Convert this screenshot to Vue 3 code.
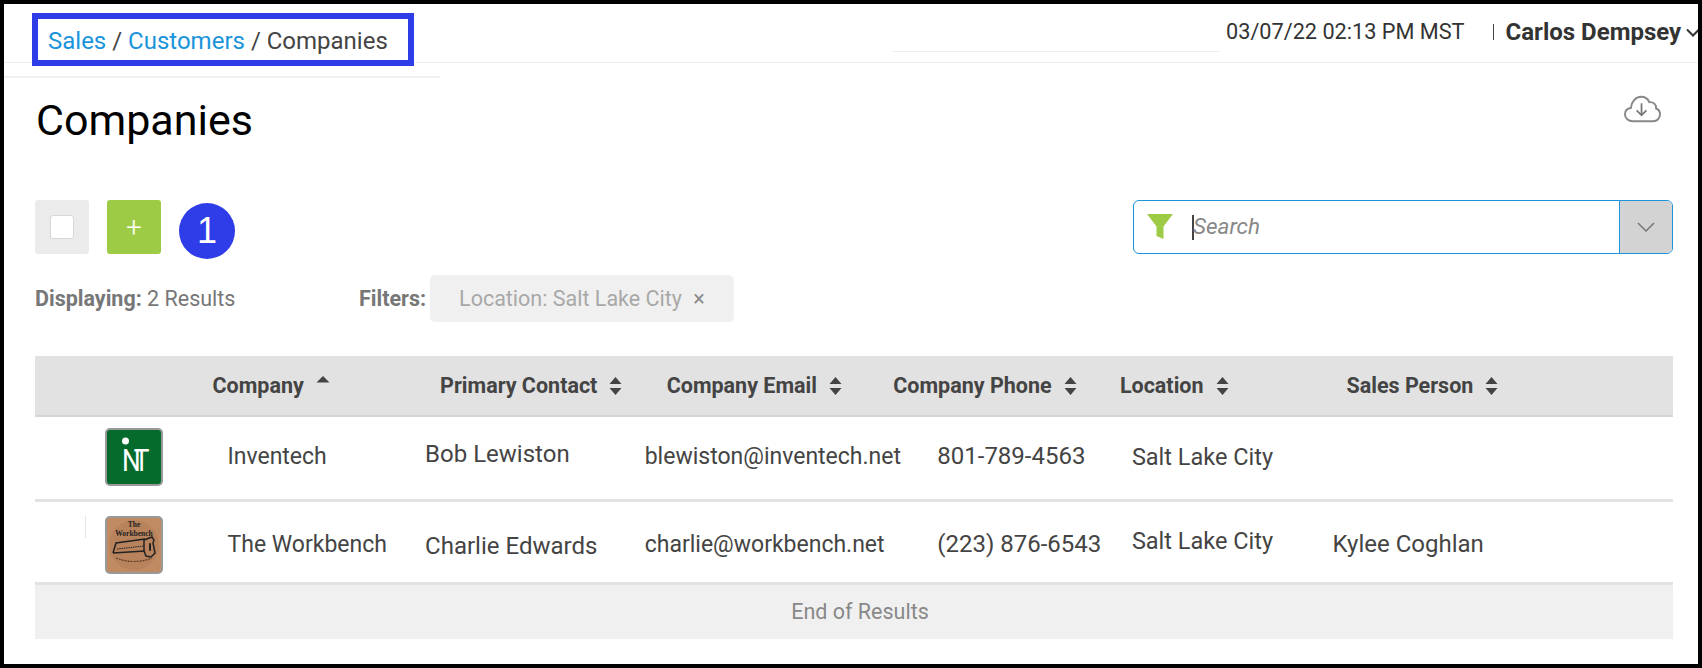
<script setup>
const columns = [
  { label: 'Company', sort: 'asc' },
  { label: 'Primary Contact' },
  { label: 'Company Email' },
  { label: 'Company Phone' },
  { label: 'Location' },
  { label: 'Sales Person' }
]
</script>

<template>
  <div class="page">
    <header class="topbar">
      <nav class="crumbs">
        <a>Sales</a> / <a>Customers</a> / Companies
      </nav>
      <div class="top-right">
        <div class="top-input"></div>
        <div class="clock">03/07/22 02:13 PM MST</div>
        <div class="user">
          <span class="user-name">Carlos Dempsey</span>
          <svg class="user-caret" width="14" height="9" viewBox="0 0 14 9">
            <path d="M1 1.500l6 6 6-6" fill="none" stroke="#333" stroke-width="2" />
          </svg>
        </div>
      </div>
    </header>

    <div class="title-row">
      <h1>Companies</h1>
      <svg class="cloud" width="37" height="28" viewBox="0 0 38 28">
        <path d="M9 26.500C4.500 26.500 1 23.500 1 19.500C1 16 3.500 13.500 7 13C7.500 6.500 12 1.500 17.500 1.500C21.500 1.500 24.500 3.500 26 7C30.500 6.500 33.500 10 33 13.500C35.500 14.500 37 17 37 19.500C37 23.500 34 26.500 30 26.500Z" fill="none" stroke="#888" stroke-width="2" />
        <path d="M18 8v12.500M13 15.500l5 5 5-5" fill="none" stroke="#777" stroke-width="1.800" />
      </svg>
    </div>

    <div class="tools">
      <div class="tool-left">
        <div class="check-btn"><span class="check-box"></span></div>
        <div class="add-btn">+</div>
        <div class="badge">1</div>
      </div>
      <div class="search">
        <svg class="funnel" width="26" height="26" viewBox="0 0 26 26">
          <path d="M0 0h26L16.500 12.500V25l-7-3V12.500Z" fill="#9ecb45" />
        </svg>
        <span class="cursor"></span>
        <span class="placeholder">Search</span>
        <span class="search-drop">
          <svg width="18" height="10" viewBox="0 0 18 10">
            <path d="M1 1l8 8 8-8" fill="none" stroke="#777" stroke-width="1.500" />
          </svg>
        </span>
      </div>
    </div>

    <div class="summary">
      <div class="displaying"><b>Displaying:</b> 2 Results</div>
      <div class="filters">
        <b>Filters:</b>
        <span class="chip">Location: Salt Lake City <i>×</i></span>
      </div>
    </div>

    <div class="table">
      <div class="thead">
        <div v-for="col in columns" :key="col.label" class="th">
          {{ col.label }}
          <svg v-if="col.sort === 'asc'" class="sort sort-asc" width="14" height="18" viewBox="0 0 14 18">
            <path d="M7 1l6.500 6.500H.5Z" fill="#444" />
          </svg>
          <svg v-else class="sort" width="13" height="18" viewBox="0 0 13 18">
            <path d="M6.500 0l6 7H.5ZM6.500 18L.5 11h12Z" fill="#444" />
          </svg>
        </div>
      </div>

      <div class="row row-first">
        <div class="logo-cell">
          <svg class="logo" width="58" height="58" viewBox="0 0 58 58">
            <rect x="1" y="1" width="56" height="56" rx="4" fill="#056b2c" stroke="#999" stroke-width="2" />
            <circle cx="20.500" cy="13" r="3.500" fill="#fff" />
            <text transform="translate(17 43) scale(.82 1)" class="logo-it">NT</text>
          </svg>
        </div>
        <div class="cell c-name">Inventech</div>
        <div class="cell c-contact up">Bob Lewiston</div>
        <div class="cell c-email">blewiston@inventech.net</div>
        <div class="cell c-phone">801-789-4563</div>
        <div class="cell c-loc down">Salt Lake City</div>
        <div class="cell c-sales"></div>
      </div>

      <div class="row row-second">
        <div class="logo-cell">
          <span class="tick"></span>
          <svg class="logo" width="58" height="58" viewBox="0 0 58 58">
            <rect x="1" y="1" width="56" height="56" rx="4" fill="#c08a63" stroke="#999" stroke-width="2" />
            <circle cx="29" cy="29" r="25" fill="#b8825c" />
            <text x="29" y="11" class="logo-small">The</text>
            <text x="29" y="20" class="logo-small">Workbench</text>
            <path d="M8 37l3-10 29-4M8 37l32-2" fill="none" stroke="#222" stroke-width="1.500" />
            <path d="M12 33l27-3" fill="none" stroke="#222" stroke-width="1" stroke-dasharray="1.500 .8" />
            <path d="M39 24l8-3 2 3-1 3 2 10-4 4-5-1-2-5Z" fill="none" stroke="#222" stroke-width="1.500" />
            <path d="M45 28v6" stroke="#222" stroke-width="2" stroke-linecap="round" />
            <path d="M11 42q18 7 36 0" fill="none" stroke="#5b3a22" stroke-width="1.200" stroke-dasharray="2 1" />
          </svg>
        </div>
        <div class="cell c-name">The Workbench</div>
        <div class="cell c-contact down2">Charlie Edwards</div>
        <div class="cell c-email">charlie@workbench.net</div>
        <div class="cell c-phone">(223) 876-6543</div>
        <div class="cell c-loc up2">Salt Lake City</div>
        <div class="cell c-sales">Kylee Coghlan</div>
      </div>

      <div class="tfoot">End of Results</div>
    </div>

    <div class="callout"></div>
  </div>
</template>

<style>
html, body {
  margin: 0;
  background: #000;
}
</style>

<style scoped>
.page {
  position: relative;
  box-sizing: border-box;
  width: 1702px;
  height: 668px;
  border: 4px solid #000;
  background: #fff;
  overflow: hidden;
  font-family: Roboto, "Liberation Sans", sans-serif;
  color: #444;
}

.topbar {
  display: flex;
  height: 72px;
  box-sizing: border-box;
}
.crumbs {
  flex: none;
  box-sizing: border-box;
  width: 436px;
  height: 74px;
  padding: 23px 0 0 44px;
  border-bottom: 2px solid #f0f0f0;
  font-size: 24px;
  line-height: 28px;
  background: linear-gradient(#eee, #eee) 0 58px / 100% 1px no-repeat;
}
.crumbs a {
  color: #1a94db;
}
.top-right {
  flex: 1;
  min-width: 0;
  display: flex;
  height: 59px;
  border-bottom: 1px solid #eee;
  box-sizing: border-box;
  padding-top: 14px;
  white-space: nowrap;
  font-size: 21.7px;
  line-height: 28px;
  color: #333;
}
.top-input {
  flex: none;
  width: 328px;
  height: 33px;
  margin-left: 452px;
  border-bottom: 1px solid #eee;
}
.clock {
  margin-left: 6px;
}
.user {
  margin-left: 28px;
  display: flex;
  align-items: center;
  height: 28px;
  padding-left: 13px;
  position: relative;
}
.user::before {
  content: "";
  position: absolute;
  left: 0;
  top: 6px;
  height: 16px;
  width: 1px;
  background: #444;
}
.user-name {
  font-weight: 700;
  font-size: 24px;
}
.user-caret {
  margin-left: 5px;
  flex: none;
}

.title-row {
  display: flex;
  justify-content: space-between;
  padding: 19px 37px 0 32px;
  height: 80px;
  box-sizing: border-box;
}
h1 {
  margin: 0;
  font-size: 43px;
  line-height: 50px;
  font-weight: 400;
  color: #000;
}
.cloud {
  margin-top: 0;
}

.tools {
  display: flex;
  justify-content: space-between;
  padding: 44px 25px 0 31px;
  height: 119px;
  box-sizing: border-box;
}
.tool-left {
  display: flex;
  gap: 18px;
  align-self: flex-start;
}
.check-btn,
.add-btn {
  box-sizing: border-box;
  width: 54px;
  height: 54px;
  border-radius: 3px;
  display: flex;
  align-items: center;
  justify-content: center;
}
.check-btn {
  background: #ebebeb;
}
.check-box {
  box-sizing: border-box;
  width: 24px;
  height: 24px;
  border-radius: 3px;
  background: #fff;
  border: 1px solid #d8d8d8;
}
.add-btn {
  background: #9ecb45;
  color: #fff;
  font-size: 28px;
  font-weight: 300;
}
.badge {
  width: 56px;
  height: 56px;
  margin: 3px 0 0 0;
  border-radius: 50%;
  background: #2f3de8;
  color: #fff;
  font-family: "Liberation Sans", sans-serif;
  font-size: 36px;
  line-height: 56px;
  text-align: center;
}
.search {
  box-sizing: border-box;
  width: 540px;
  height: 54px;
  display: flex;
  align-items: center;
  border: 1px solid #1a94db;
  border-radius: 6px;
  padding-left: 13px;
  overflow: hidden;
}
.funnel {
  flex: none;
}
.cursor {
  width: 2px;
  height: 25px;
  margin-left: 19px;
  background: #444;
}
.placeholder {
  flex: 1;
  margin-left: -1px;
  padding-bottom: 2px;
  font-style: italic;
  font-size: 22.5px;
  color: #888;
}
.search-drop {
  box-sizing: border-box;
  width: 53px;
  height: 100%;
  display: flex;
  align-items: center;
  justify-content: center;
  background: #d3d3d3;
  border-left: 1px solid #1a94db;
}

.summary {
  display: flex;
  padding-left: 31px;
  height: 81px;
  font-size: 21.5px;
  color: #777;
}
.summary b {
  font-weight: 700;
}
.displaying {
  width: 324px;
  line-height: 47px;
  white-space: nowrap;
}
.filters {
  display: flex;
  line-height: 47px;
  gap: 4px;
}
.chip {
  width: 304px;
  height: 47px;
  padding-left: 29px;
  box-sizing: border-box;
  background: #f0f0f0;
  border-radius: 5px;
  color: #a8a8a8;
  white-space: nowrap;
}
.chip i {
  font-style: normal;
  margin-left: 6px;
  color: #888;
}

.table {
  margin: 0 25px 0 31px;
}
.thead,
.row {
  display: grid;
  grid-template-columns: 178.500px repeat(5, 226.600px) 1fr;
}
.thead {
  height: 61px;
  box-sizing: border-box;
  background: #e2e2e2;
  border-bottom: 2px solid #d5d5d5;
  font-size: 21.5px;
  font-weight: 700;
  color: #444;
  align-items: center;
  line-height: 24px;
}
.th {
  white-space: nowrap;
  display: flex;
  align-items: center;
  gap: 12px;
}
.th:first-child {
  grid-column: 2;
  margin-left: -1px;
}
.sort-asc {
  margin-bottom: 4px;
}
.row {
  height: 83px;
  box-sizing: border-box;
  border-bottom: 3px solid #e2e2e2;
  align-items: center;
  font-size: 23px;
  color: #444;
}
.row-first {
  height: 85px;
  padding-bottom: 4px;
}
.row-second {
  padding-top: 4px;
}
.logo-cell {
  position: relative;
  padding-left: 70px;
  height: 58px;
  margin-top: 2px;
}
.tick {
  position: absolute;
  left: 50px;
  top: 0;
  height: 22px;
  width: 1px;
  background: #e6e6e6;
}
.logo {
  display: block;
}
.logo-it {
  fill: #fff;
  font-size: 32px;
  letter-spacing: -8px;
  font-family: Roboto, sans-serif;
}
.logo-small {
  fill: #222;
  font-size: 7.5px;
  font-weight: 700;
  text-anchor: middle;
  font-family: "Liberation Serif", serif;
}
.cell {
  white-space: nowrap;
}
.c-name { padding-left: 14px; }
.c-contact { margin-left: -15px; font-size: 24px; }
.c-email { margin-left: -22px; }
.c-phone { margin-left: 44px; font-size: 24px; }
.c-loc { margin-left: 12px; font-size: 23.5px; }
.c-sales { margin-left: -14px; font-size: 24px; }
.up { margin-bottom: 4px; }
.up2 { margin-bottom: 6px; }
.down { margin-top: 2px; }
.down2 { margin-top: 4px; }
.tfoot {
  height: 54px;
  padding-left: 12px;
  background: #f0f0f0;
  font-size: 21.5px;
  line-height: 54px;
  text-align: center;
  color: #888;
}

.callout {
  position: absolute;
  left: 28px;
  top: 9px;
  width: 382px;
  height: 53px;
  box-sizing: border-box;
  border: 6px solid #2f3de8;
}
</style>
